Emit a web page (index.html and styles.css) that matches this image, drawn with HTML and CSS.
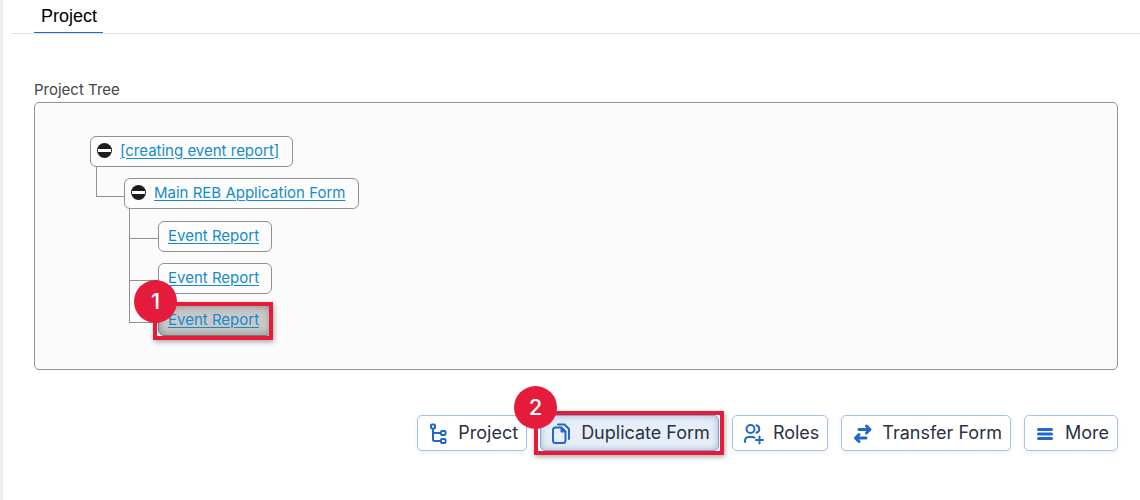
FILE: index.html
```html
<!DOCTYPE html>
<html lang="en">
<head>
<meta charset="utf-8">
<title>Project</title>
<link rel="stylesheet" href="styles.css">
</head>
<body>
<main class="page">
  <nav class="tabs"><a class="tab" href="#project">Project</a></nav>
  <section class="content">
    <h2 class="label" id="tree-label">Project Tree</h2>
    <div class="panel" role="group" aria-labelledby="tree-label">
      <div class="node">
        <button class="toggle" type="button" aria-label="Collapse project"></button>
        <a href="#root">[creating event report]</a>
      </div>
      <ul class="branch">
        <li>
          <div class="node">
            <button class="toggle" type="button" aria-label="Collapse form"></button>
            <a href="#main">Main REB Application Form</a>
          </div>
          <ul class="branch">
            <li><div class="node leaf"><a href="#event-1">Event Report</a></div></li>
            <li><div class="node leaf"><a href="#event-2">Event Report</a></div></li>
            <li><div class="node leaf marked selected"><a href="#event-3">Event Report</a><span class="badge">1</span></div></li>
          </ul>
        </li>
      </ul>
    </div>
    <div class="actions">
      <button class="action" type="button">
        <svg class="icon" viewBox="0 0 20 20"><path d="M4 6v10.500Q4 18 5.500 18H12M4 10h8"/><rect x="2" y="1.500" width="4" height="4" rx="1"/><rect x="12" y="8" width="4.500" height="4" rx="1"/><rect x="12" y="16" width="4.500" height="4" rx="1"/></svg>
        Project</button>
      <button class="action marked pressed" type="button">
        <svg class="icon" viewBox="0 0 20 20"><path d="M9.500 4.500H3.500Q1 4.500 1 7V17.500Q1 20 3.500 20H11Q13.500 20 13.500 17.500V8.500ZM9.500 5V8.500H13.500M6 1.500H12.500L17 6V16"/></svg>
        Duplicate Form<span class="badge">2</span></button>
      <button class="action" type="button">
        <svg class="icon" viewBox="0 0 20 20"><circle cx="6.500" cy="6" r="4"/><path d="M12.500 2.200a4 4 0 0 1 0 7.600M1 19v-1Q1 14 5 14H8Q9.500 14 10.500 14.500M15.500 13.500v7M12 17h7"/></svg>
        Roles</button>
      <button class="action" type="button">
        <svg class="icon heavy" viewBox="0 0 20 20"><path d="M6 6.500H16.500M13.500 3l3.500 3.500-3.500 3.500M13 15H3M6 11.500l-3.500 3.500 3.500 3.500"/></svg>
        Transfer Form</button>
      <button class="action" type="button">
        <svg class="icon heavy" viewBox="0 0 20 20"><path d="M2.500 6.500H15.500M2.500 11H15.500M2.500 15.500H15.500"/></svg>
        More</button>
    </div>
  </section>
</main>
</body>
</html>
```
FILE: styles.css
```css
* { box-sizing: border-box; }
body {
  margin: 0;
  min-height: 100vh;
  border-left: 3px solid #edeef2;
  background: #fff;
  color: #293241;
  font-family: Inter, "Liberation Sans", sans-serif;
}
.tabs {
  display: flex;
  height: 34px;
  margin-left: 8px;
  padding-left: 23px;
  border-bottom: 1px solid #e3e3e3;
}
.tab {
  height: 33px;
  padding: 5px 6px 0 7px;
  border-bottom: 1px solid #2268c7;
  color: #000;
  font: 18px/22px "Liberation Sans", Arial, sans-serif;
  text-decoration: none;
}
.content { padding: 46px 22px 0 31px; }
.label {
  margin: 0 0 2px;
  color: #454545;
  font-size: 15px;
  font-weight: 400;
  line-height: 20px;
}
.panel {
  min-height: 268px;
  padding: 33px 55px 30px;
  border: 1px solid #919191;
  border-radius: 5px;
  background: #fbfbfb;
}
.node {
  position: relative;
  display: flex;
  align-items: center;
  gap: 8px;
  width: fit-content;
  height: 31px;
  padding: 0 13px 2px 6px;
  border: 1px solid #919191;
  border-radius: 6px;
  background: #fcfcfc;
  font-size: 15px;
  line-height: 20px;
}
.node a {
  color: #148bcb;
  text-underline-offset: 2px;
  text-decoration-thickness: 1px;
}
.leaf { padding: 0 12px 2px 9px; }
.toggle {
  width: 15px;
  height: 15px;
  padding: 0;
  border: 0;
  border-radius: 50%;
  background: linear-gradient(#fff, #fff) center / 13px 3px no-repeat #1d1d1d;
}
.branch {
  margin: 0;
  padding: 0 0 0 34px;
  list-style: none;
}
.branch > li {
  position: relative;
  padding-top: 11px;
}
.branch .branch > li:first-child { padding-top: 12px; }
.branch > li::before {
  position: absolute;
  top: 0;
  left: -28px;
  width: 28px;
  height: 29px;
  border: solid #919191;
  border-width: 0 0 1px 1px;
  content: "";
}
.branch .branch > li::before { left: -29px; width: 29px; }
.branch .branch > li + li::before { top: -14px; height: 42px; }
.marked { position: relative; }
.marked::after {
  position: absolute;
  inset: -4px -2px -5px -6px;
  border: 4px solid #e51b3b;
  box-shadow: 1px 2px 5px #0005;
  content: "";
  pointer-events: none;
}
.action.marked::after { inset: -5px -6px -5px -7px; }
.selected {
  border-color: #777;
  background: #c9c9c9;
  box-shadow: inset 0 0 9px #888;
}
.badge {
  position: absolute;
  z-index: 1;
  top: -26px;
  left: -25px;
  width: 43px;
  height: 43px;
  border-radius: 50%;
  background: #e51b3b;
  color: #fff;
  font-size: 22px;
  font-weight: 500;
  line-height: 42px;
  text-align: center;
}
.action .badge { top: -30px; left: -27px; }
.actions {
  display: flex;
  justify-content: flex-end;
  gap: 13px;
  margin-top: 45px;
}
.action {
  display: flex;
  align-items: center;
  gap: 9px;
  height: 36px;
  padding: 0 8px 0 11px;
  border: 1px solid #a5c2ed;
  border-radius: 5px;
  background: #fff;
  box-shadow: 0 2px 5px #0001;
  color: #293241;
  font: 18px/24px Inter, "Liberation Sans", sans-serif;
  white-space: nowrap;
}
.pressed {
  border-color: #82a2cc;
  background: #e7eef8;
  box-shadow: inset 0 0 7px #a3b5d0;
}
.icon {
  width: 20px;
  height: 20px;
  overflow: visible;
  fill: none;
  stroke: #2268c7;
  stroke-width: 2;
  stroke-linecap: round;
  stroke-linejoin: round;
}
.heavy { stroke-width: 3; }
```
